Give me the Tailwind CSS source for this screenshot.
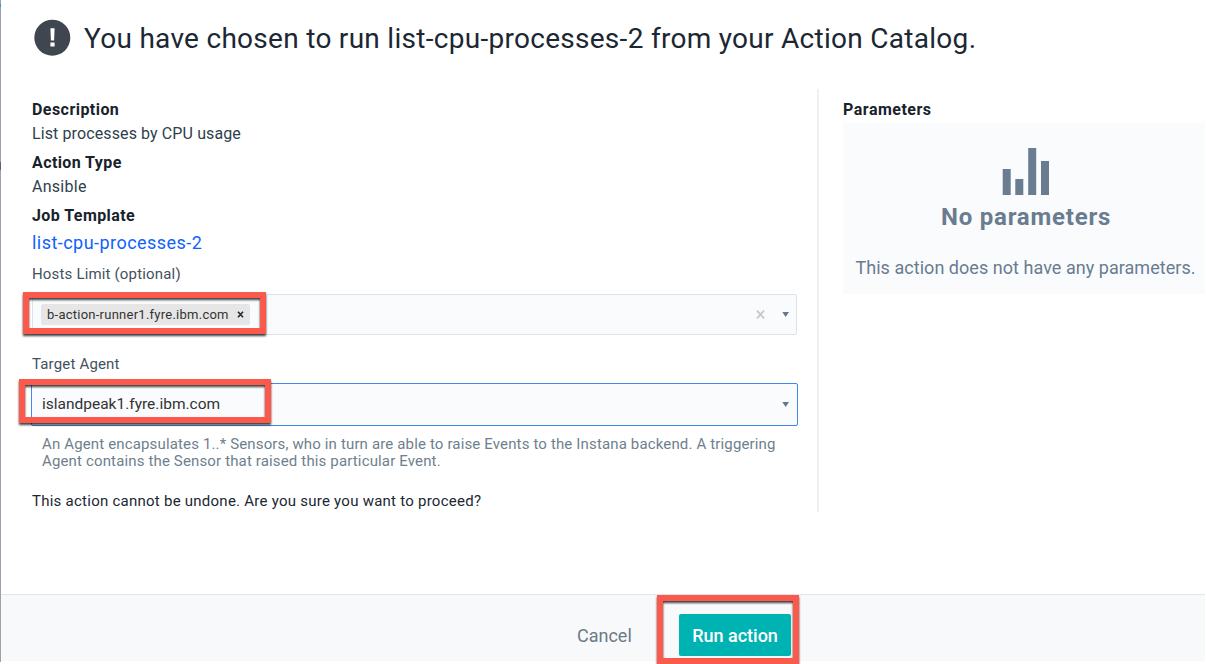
<!DOCTYPE html>
<html lang="en">
<head>
<meta charset="utf-8">
<title>Run action</title>
<script src="https://cdn.jsdelivr.net/npm/@tailwindcss/browser@4"></script>
</head>
<body class="relative w-[1206px] h-[664px] overflow-hidden bg-white font-[Roboto,'Noto_Sans',sans-serif] text-[#2f3f4c] whitespace-nowrap">
<div class="flex h-[662px] w-[1206px]">
  <div class="w-px shrink-0 bg-[#9ca1b0] flex flex-col">
    <div class="mt-1 h-[3px] bg-[#1ba9ae]"></div>
    <div class="mt-[155px] h-2 bg-[#5c6474]"></div>
  </div>
  <div class="flex w-[1204px] flex-col">
    <header class="flex h-[89px] items-start pl-[33px] pt-[19px]">
      <svg class="size-[37px] shrink-0" viewBox="0 0 37 37"><circle cx="18.3" cy="18.7" r="18" fill="#3f4650"/><path d="M16.4 9.2h4.2l-.5 12.3h-3.2zM16.4 23.6h4.2v4h-4.2z" fill="#fff"/></svg>
      <h1 class="ml-[13px] mt-px text-[28px] leading-[38px] tracking-[0.285px] text-[#1b2733]">You have chosen to run list-cpu-processes-2 from your Action Catalog.</h1>
    </header>
    <main class="flex h-[505px]">
      <section class="flex h-[423px] w-[818px] flex-col border-r-2 border-[#eff0f2] pl-[31px]">
        <h2 class="mt-[9px] text-base leading-6 font-bold tracking-[0.45px] text-[#17222b]">Description</h2>
        <p class="text-base leading-6 tracking-[0.11px]">List processes by CPU usage</p>
        <h2 class="mt-[5px] text-base leading-6 font-bold tracking-[0.4px] text-[#17222b]">Action Type</h2>
        <p class="text-base leading-6 tracking-[0.28px]">Ansible</p>
        <h2 class="mt-[5px] text-base leading-6 font-bold tracking-[0.42px] text-[#17222b]">Job Template</h2>
        <a class="mt-[3px] text-[18px] leading-6 tracking-[0.46px] text-[#0f62fe]">list-cpu-processes-2</a>
        <label class="mt-[9px] text-[15px] leading-5 tracking-[0.17px] text-[#44515e]">Hosts Limit (optional)</label>
        <div class="mt-[10px] flex h-[41px] w-[765px] shrink-0 items-center rounded-[2px] border border-[#dce3ea] bg-[#fafbfd] pl-2">
          <div class="flex h-[21px] w-[209px] items-center rounded-[2px] bg-[#e6e6e6] pl-[6px] text-[13px] tracking-[0.25px] text-[#333]">b-action-runner1.fyre.ibm.com
            <svg class="ml-[8px] size-[7px]" viewBox="0 0 7 7"><path d="M1 .7l5 5.6M6 .7L1 6.3" stroke="#1f2a35" stroke-width="1.6"/></svg>
          </div>
          <svg class="ml-auto size-[9px]" viewBox="0 0 9 9"><path d="M1 .7l7 7.6M8 .7L1 8.3" stroke="#c6c8ca" stroke-width="1.9"/></svg>
          <svg class="ml-[17px] mr-[7px] h-[5px] w-[7px]" viewBox="0 0 7 5"><path d="M.3 0h6.7L3.7 5z" fill="#66798c"/></svg>
        </div>
        <label class="mt-[19px] text-[15px] leading-5 tracking-[0.17px] text-[#44515e]">Target Agent</label>
        <div class="-ml-px mt-[9px] flex h-[43px] w-[767px] shrink-0 items-center rounded-[2px] border border-[#3f8ae8] bg-[#fafbfd] pl-[10px] text-[15.5px] text-[#333]">islandpeak1.fyre.ibm.com
          <svg class="ml-auto mr-2 h-[5px] w-[7px]" viewBox="0 0 7 5"><path d="M.3 0h6.7L3.7 5z" fill="#66798c"/></svg>
        </div>
        <p class="ml-[10px] mt-[10px] text-[15px] leading-[17px] tracking-[0.147px] text-[#6e7f8e]">An Agent encapsulates 1..* Sensors, who in turn are able to raise Events to the Instana backend. A triggering<br>Agent contains the Sensor that raised this particular Event.</p>
        <p class="mt-[19px] text-[15px] leading-6 tracking-[0.25px] text-[#1b2733]">This action cannot be undone. Are you sure you want to proceed?</p>
      </section>
      <section class="ml-6 w-[362px]">
        <h2 class="mt-[9px] text-base leading-6 font-bold tracking-[0.5px] text-[#17222b]">Parameters</h2>
        <div class="mt-px flex h-[171px] flex-col items-center bg-[#fafbfd] text-[#697c90]">
          <svg class="ml-[3px] mt-[25px] h-[47px] w-[47px] shrink-0" viewBox="0 0 47 47" fill="#697c90"><path d="M.7 21h8v26h-8zM13.3 31h8v16h-8zM26.2 0h8v47h-8zM39 13h8v34h-8z"/></svg>
          <p class="ml-1 mt-1.5 text-[24px] leading-8 font-bold tracking-[0.78px]">No parameters</p>
          <p class="ml-[3px] mt-[23px] text-[18px] leading-6 tracking-[0.04px]">This action does not have any parameters.</p>
        </div>
      </section>
    </main>
    <footer class="flex h-[67px] border-t border-[#dfe5ea] bg-[#f8f9fb] pl-[576px] pt-[19px]">
      <button class="h-[42px] w-[54px] text-left text-[18px] text-[#6b7a88]">Cancel</button>
      <button class="ml-12 h-[42px] w-[112px] rounded-[2px] bg-[#00b3b3] text-[18px] font-medium text-white">Run action</button>
    </footer>
  </div>
</div>
<div class="absolute left-[23px] top-[292px] h-[42px] w-[243px] border-6 border-[#fb594b] drop-shadow-[0_2px_1px_rgba(0,0,0,0.75)]"></div>
<div class="absolute left-[19px] top-[379px] h-[44px] w-[252px] border-6 border-[#fb594b] drop-shadow-[0_2px_1px_rgba(0,0,0,0.75)]"></div>
<div class="absolute left-[657px] top-[595px] h-[69px] w-[142px] border-6 border-[#fb594b] drop-shadow-[0_2px_1px_rgba(0,0,0,0.75)]"></div>
</body>
</html>
